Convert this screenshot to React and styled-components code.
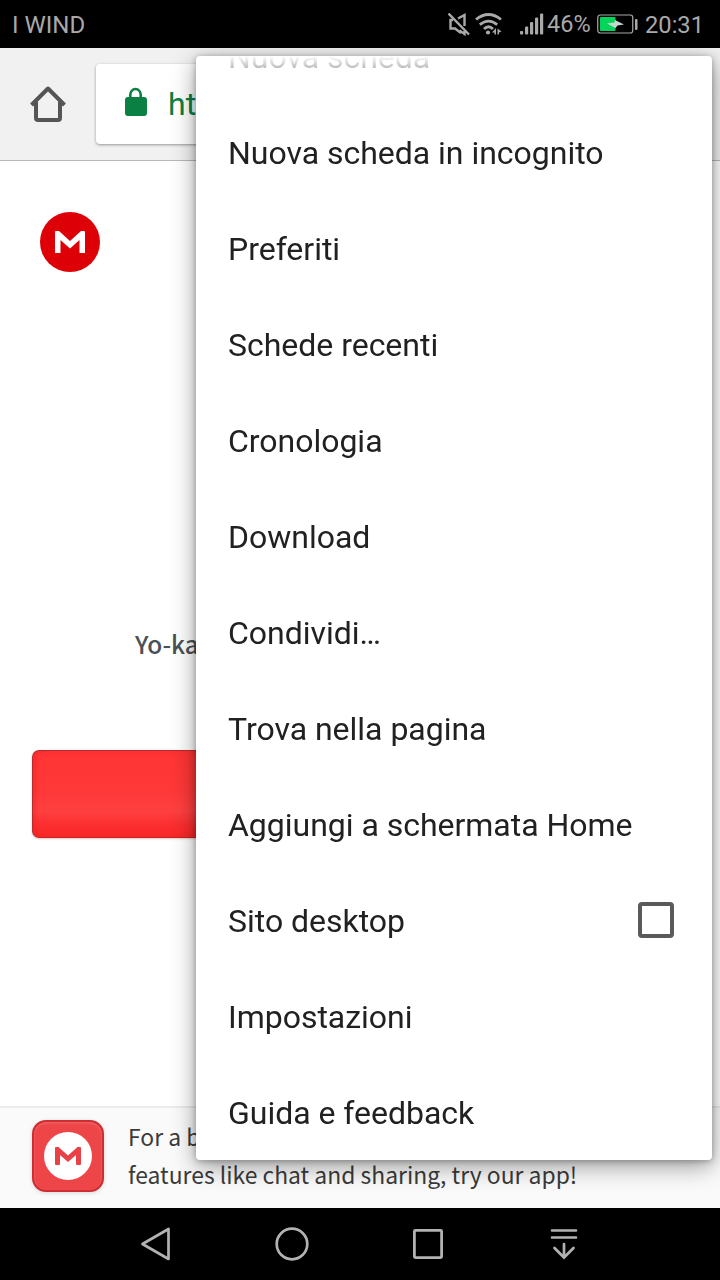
import React from "react";
import styled, { createGlobalStyle } from "styled-components";

const GlobalStyle = createGlobalStyle`
  * { box-sizing: border-box; }
  body { margin: 0; background: #fff; }
`;

const sourceSans = `"Noto Sans CJK SC", "Open Sans", sans-serif`;

const Screen = styled.div`
  position: relative;
  width: 720px;
  height: 1280px;
  overflow: hidden;
  display: flex;
  flex-direction: column;
  background: #fff;
  font-family: Roboto, sans-serif;
`;

const StatusBar = styled.header`
  flex: none;
  height: 48px;
  padding: 2px 16px 0 12px;
  display: flex;
  align-items: center;
  justify-content: space-between;
  background: #000;
  color: #a9a9a9;
  font-size: 24px;
  line-height: 28px;
`;

const Carrier = styled.span`
  font-size: 24px;
`;

const StatusIcons = styled.div`
  display: flex;
  align-items: center;
  height: 28px;
  svg { display: block; flex: none; }
`;

const MuteIcon = styled.svg`
  margin-right: 5px;
`;

const WifiIcon = styled.svg`
  margin-right: 18px;
`;

const BatteryIcon = styled.svg`
  margin-top: -3px;
`;

const Percent = styled.span`
  width: 44px;
  margin: -3px 6px 0 3px;
  white-space: nowrap;
  font-size: 23.5px;
`;

const Clock = styled.span`
  width: 59px;
  margin-left: 7px;
  white-space: nowrap;
  font-size: 23.7px;
`;

const Toolbar = styled.div`
  flex: none;
  height: 113px;
  padding: 16px 0 0 30px;
  display: flex;
  align-items: flex-start;
  background: #f1f1f1;
  border-bottom: 1px solid #b9b9b9;
`;

const HomeIcon = styled.svg`
  flex: none;
  margin: 21px 30px 0 0;
`;

const AddressBar = styled.div`
  flex: none;
  width: 500px;
  height: 80px;
  padding-left: 28px;
  display: flex;
  align-items: center;
  gap: 20px;
  background: #fff;
  border-radius: 4px;
  box-shadow: 0 1px 3px rgba(0, 0, 0, 0.38);
  color: #0b8043;
  font-size: 32px;
  svg { margin-top: -4px; }
`;

const Page = styled.main`
  flex: 1;
  display: flex;
  flex-direction: column;
  padding: 51px 32px 0;
`;

const MegaLogo = styled.svg`
  flex: none;
  margin-left: 8px;
`;

const FileName = styled.div`
  margin: 352px 0 0 103px;
  height: 40px;
  font: 500 24.4px/40px ${sourceSans};
  color: #4a5157;
`;

const DownloadButton = styled.div`
  height: 88px;
  margin-top: 86px;
  border: 1px solid #bd2a2c;
  border-bottom-color: #c92325;
  border-radius: 7px;
  background: linear-gradient(#ff3435 0%, #ff3838 45%, #ff4040 70%, #fb2c2d 88%, #fa2829 100%);
  box-shadow: inset 3px 0 5px rgba(235, 30, 30, 0.4), 0 1px 2px rgba(120, 40, 0, 0.25);
`;

const AppBanner = styled.footer`
  flex: none;
  height: 102px;
  padding: 14px 32px 0;
  display: flex;
  gap: 24px;
  background: #fafafa;
  border-top: 2px solid #ebebeb;
`;

const AppIcon = styled.div`
  flex: none;
  width: 72px;
  height: 72px;
  margin-top: -2px;
  display: flex;
  align-items: center;
  justify-content: center;
  background: #ed4548;
  border: 2px solid #cf2d31;
  border-radius: 14px;
  box-shadow: inset 0 1px 3px rgba(255, 255, 255, 0.2), 0 1px 4px rgba(0, 0, 0, 0.15);
`;

const BannerText = styled.p`
  margin: -5px 0 0;
  font: 400 22.9px/38px ${sourceSans};
  color: #3a3a3a;
  white-space: pre;
`;

const NavBar = styled.nav`
  flex: none;
  height: 72px;
  display: flex;
  justify-content: center;
  background: #000;
`;

const NavButton = styled.div`
  width: 136px;
  display: flex;
  align-items: center;
  justify-content: center;
`;

const Menu = styled.div`
  position: absolute;
  left: 196px;
  top: 56px;
  width: 516px;
  height: 1104px;
  border-radius: 4px;
  background: #fff;
  box-shadow: 0 6px 24px rgba(0, 0, 0, 0.4), 0 1px 6px rgba(0, 0, 0, 0.28);
`;

const MenuList = styled.div`
  height: 100%;
  display: flex;
  flex-direction: column;
  justify-content: flex-end;
  overflow: hidden;
  border-radius: 4px;
  mask-image: linear-gradient(transparent 0, rgba(0, 0, 0, 0.5) 20px, #000 48px);
`;

const MenuItem = styled.div`
  flex: none;
  height: 96px;
  padding: 2px 38px 0 32px;
  display: flex;
  align-items: center;
  justify-content: space-between;
  color: #212121;
  font-size: 32px;
  letter-spacing: -0.02px;
  white-space: nowrap;
`;

const Checkbox = styled.span`
  width: 36px;
  height: 36px;
  margin-top: -2px;
  border: 4px solid #5a5a5a;
  border-radius: 4px;
`;

const items = [
  "Nuova scheda",
  "Nuova scheda in incognito",
  "Preferiti",
  "Schede recenti",
  "Cronologia",
  "Download",
  "Condividi…",
  "Trova nella pagina",
  "Aggiungi a schermata Home",
  "Sito desktop",
  "Impostazioni",
  "Guida e feedback",
];

export default function App() {
  return (
    <>
      <GlobalStyle />
      <Screen>
        <StatusBar>
          <Carrier>I WIND</Carrier>
          <StatusIcons>
            <MuteIcon width="22" height="24" viewBox="0 0 22 24" fill="none" stroke="#a9a9a9" strokeWidth="2.400">
              <path d="M0.500 0.500L21 21.500M10 5.500L16.500 2V13M11.500 17.500L16.500 21V18M5 7H2.500V15.500H7L13 20" />
            </MuteIcon>
            <WifiIcon width="27" height="24" viewBox="0 0 27 24" fill="none" stroke="#a9a9a9" strokeWidth="2.800">
              <path d="M1 6.500Q13.500-3.500 26 6.500M4.800 11.700Q13.500 4.500 22.200 11.700M9 16Q13.500 11.500 18 16" />
              <circle cx="13" cy="19.500" r="2.100" fill="#a9a9a9" stroke="none" />
              <path d="M21 15V21.500H19.500V19.500L17 19.500ZM22.500 15.500L26.500 18.500L24 19.500V21.500H22.500Z" fill="#a9a9a9" stroke="none" />
            </WifiIcon>
            <svg width="24" height="24" viewBox="0 0 24 24" fill="#a9a9a9">
              <rect x="0" y="18" width="3.200" height="3.500" rx="1" />
              <rect x="5" y="13.500" width="3.200" height="8" rx="1" />
              <rect x="10" y="9" width="3.200" height="12.500" rx="1" />
              <rect x="15" y="4.500" width="3.200" height="17" rx="1" />
              <rect x="20" y="0.500" width="3.200" height="21" rx="1" />
            </svg>
            <Percent>46%</Percent>
            <BatteryIcon width="41" height="20" viewBox="0 0 41 20">
              <rect x="0.750" y="1" width="35" height="18" rx="2.500" fill="none" stroke="#a9a9a9" strokeWidth="1.200" />
              <rect x="3" y="3" width="15.500" height="14" rx="1" fill="#00d45a" />
              <path d="M10 9.500L17.500 8.500L18 6L27 10.500L20.500 11.500L18.500 14Z" fill="#c9d5cf" />
              <rect x="38" y="5" width="2.500" height="11" rx="1" fill="#a9a9a9" />
            </BatteryIcon>
            <Clock>20:31</Clock>
          </StatusIcons>
        </StatusBar>
        <Toolbar>
          <HomeIcon width="36" height="38" viewBox="0 0 36 38" fill="none" stroke="#555" strokeWidth="4" strokeLinejoin="round">
            <path d="M1.500 20L18 3.500L34.500 20M6 17V33Q6 35 8 35H28Q30 35 30 33V17" />
          </HomeIcon>
          <AddressBar>
            <svg width="24" height="30" viewBox="0 0 24 30">
              <path d="M6.250 12V8A5.250 6 0 0 1 16.750 8V12" fill="none" stroke="#0b8043" strokeWidth="2.600" />
              <rect x="1" y="10" width="22" height="19" rx="3" fill="#0b8043" />
            </svg>
            ht
          </AddressBar>
        </Toolbar>
        <Page>
          <MegaLogo width="60" height="60" viewBox="0 0 60 60">
            <circle cx="30" cy="30" r="30" fill="#dd0006" />
            <path
              d="M15 40.500V20Q15 19 16 19H19L30 29L41 19H44Q45 19 45 20V40.500Q45 41 44.500 41H40Q39.500 41 39.500 40.500V28L30 36.500L20.500 28V40.500Q20.500 41 20 41H15.500Q15 41 15 40.500Z"
              fill="#fff"
            />
          </MegaLogo>
          <FileName>Yo-ka</FileName>
          <DownloadButton />
        </Page>
        <AppBanner>
          <AppIcon>
            <svg width="48" height="48" viewBox="0 0 48 48">
              <circle cx="24" cy="24" r="24" fill="#fff" />
              <path
                d="M11 32V16Q11 15 12 15H14.500L24 23.500L33.500 15H36Q37 15 37 16V32Q37 33 36 33H33Q32 33 32 32V23L24 30L16 23V32Q16 33 15 33H12Q11 33 11 32Z"
                fill="#e94146"
              />
            </svg>
          </AppIcon>
          <BannerText>{"For a b\nfeatures like chat and sharing, try our app!"}</BannerText>
        </AppBanner>
        <NavBar>
          <NavButton>
            <svg width="34" height="36" viewBox="0 0 34 36" fill="none" stroke="#b2b2b2" strokeWidth="2.700" strokeLinejoin="round">
              <path d="M3.500 18L29.500 3V33Z" />
            </svg>
          </NavButton>
          <NavButton>
            <svg width="36" height="36" viewBox="0 0 36 36" fill="none" stroke="#b2b2b2" strokeWidth="2.700">
              <circle cx="18" cy="18" r="15.300" />
            </svg>
          </NavButton>
          <NavButton>
            <svg width="36" height="36" viewBox="0 0 36 36" fill="none" stroke="#b2b2b2" strokeWidth="2.800">
              <rect x="4.400" y="4.400" width="27.200" height="27.200" rx="1" />
            </svg>
          </NavButton>
          <NavButton>
            <svg width="32" height="36" viewBox="0 0 32 36" fill="none" stroke="#b2b2b2" strokeWidth="2.700" strokeLinecap="round">
              <path d="M4 4.500H28M4 11.500H28M16 18V31M6.500 22L16 31.500L25.500 22" />
            </svg>
          </NavButton>
        </NavBar>
        <Menu>
          <MenuList>
            {items.map((label) => (
              <MenuItem key={label}>
                {label}
                {label === "Sito desktop" && <Checkbox />}
              </MenuItem>
            ))}
          </MenuList>
        </Menu>
      </Screen>
    </>
  );
}
